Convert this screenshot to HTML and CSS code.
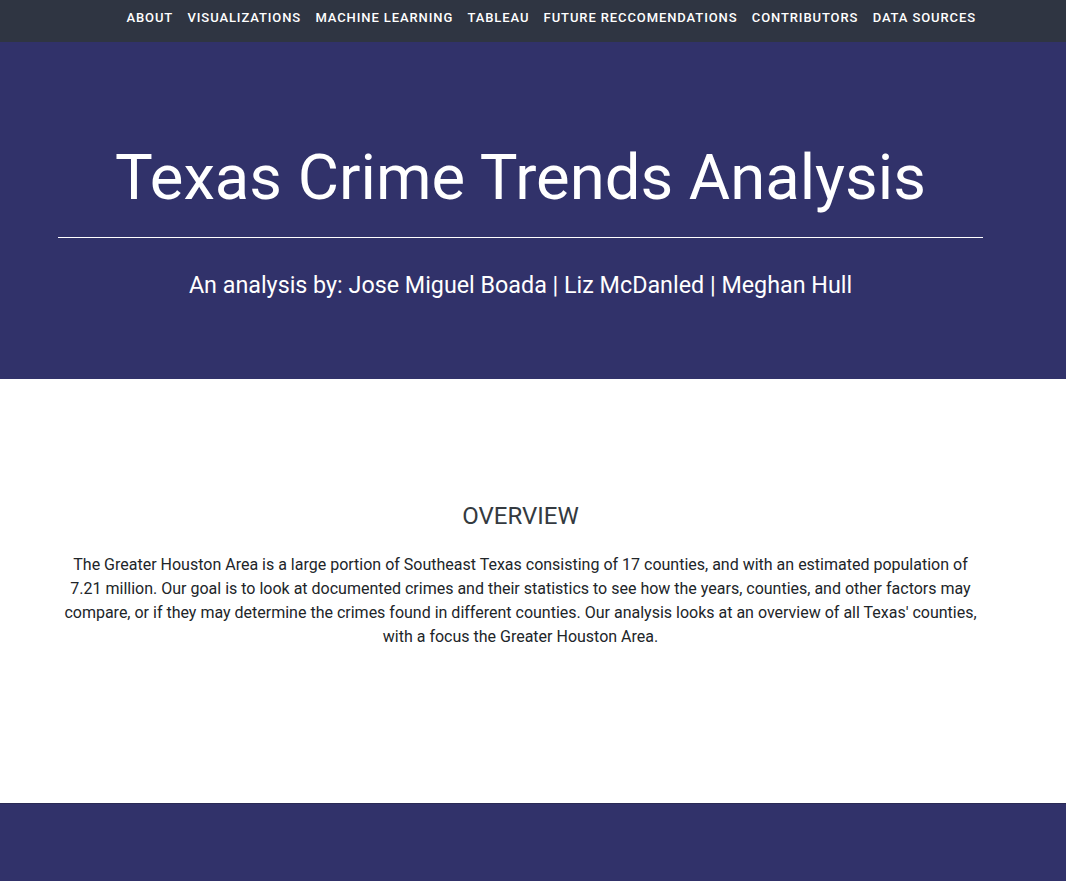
FILE: index.html
```html
<!DOCTYPE html>
<html lang="en">
<head>
<meta charset="utf-8">
<title>Texas Crime Trends Analysis</title>
<link rel="stylesheet" href="styles.css">
</head>
<body>
<nav class="topnav">
  <ul class="nav-list">
    <li><a href="#">About</a></li>
    <li><a href="#">Visualizations</a></li>
    <li><a href="#">Machine Learning</a></li>
    <li><a href="#">Tableau</a></li>
    <li><a href="#">Future Reccomendations</a></li>
    <li><a href="#">Contributors</a></li>
    <li><a href="#">Data Sources</a></li>
  </ul>
</nav>
<header class="hero">
  <div class="container">
    <h1 class="hero-title">Texas Crime Trends Analysis</h1>
    <hr class="hero-rule">
    <h2 class="hero-sub">An analysis by: Jose Miguel Boada | Liz McDanled | Meghan Hull</h2>
  </div>
</header>
<section class="overview">
  <div class="container">
    <h3 class="section-title">OVERVIEW</h3>
    <p class="section-text">The Greater Houston Area is a large portion of Southeast Texas consisting of 17 counties, and with an estimated population of 7.21 million. Our goal is to look at documented crimes and their statistics to see how the years, counties, and other factors may compare, or if they may determine the crimes found in different counties. Our analysis looks at an overview of all Texas' counties, with a focus the Greater Houston Area.</p>
  </div>
</section>
<section class="band"></section>
</body>
</html>
```
FILE: styles.css
```css
* { box-sizing: border-box; }
html, body { margin: 0; padding: 0; }
body {
  font-family: Roboto, "Liberation Sans", Arial, sans-serif;
  color: #212529;
  background: #fff;
  font-size: 16px;
  line-height: 1.5;
}
.topnav {
  background: #2f3542;
  height: 42px;
  display: flex;
  align-items: flex-start;
  justify-content: flex-end;
  padding: 8px 90px 0 0;
}
.nav-list {
  list-style: none;
  margin: 0;
  padding: 0;
  display: flex;
  gap: 14.3px;
  line-height: 18px;
}
.nav-list a {
  color: #fff;
  text-decoration: none;
  text-transform: uppercase;
  font-size: 13px;
  font-weight: 500;
  letter-spacing: 0.9px;
}
.container {
  width: 925px;
  margin-left: 58px;
}
.hero {
  background: #31326a;
  color: #fff;
  height: 337px;
  padding-top: 97px;
  text-align: center;
}
.hero-title {
  font-size: 63.4px;
  font-weight: 400;
  line-height: 1.2;
  margin: 0;
}
.hero-rule {
  border: 0;
  border-top: 1px solid #fff;
  margin: 22px 0 34px;
}
.hero-sub {
  font-size: 23.3px;
  font-weight: 400;
  line-height: 1.2;
  margin: 0;
}
.overview {
  height: 424px;
  padding-top: 123px;
  text-align: center;
}
.section-title {
  font-size: 24px;
  font-weight: 400;
  color: #343a40;
  line-height: 1.2;
  margin: 0 0 22px;
}
.section-text {
  margin: 0;
}
.band {
  background: #31326a;
  border-top: 1px solid #2a2a55;
  height: 120px;
}
```
